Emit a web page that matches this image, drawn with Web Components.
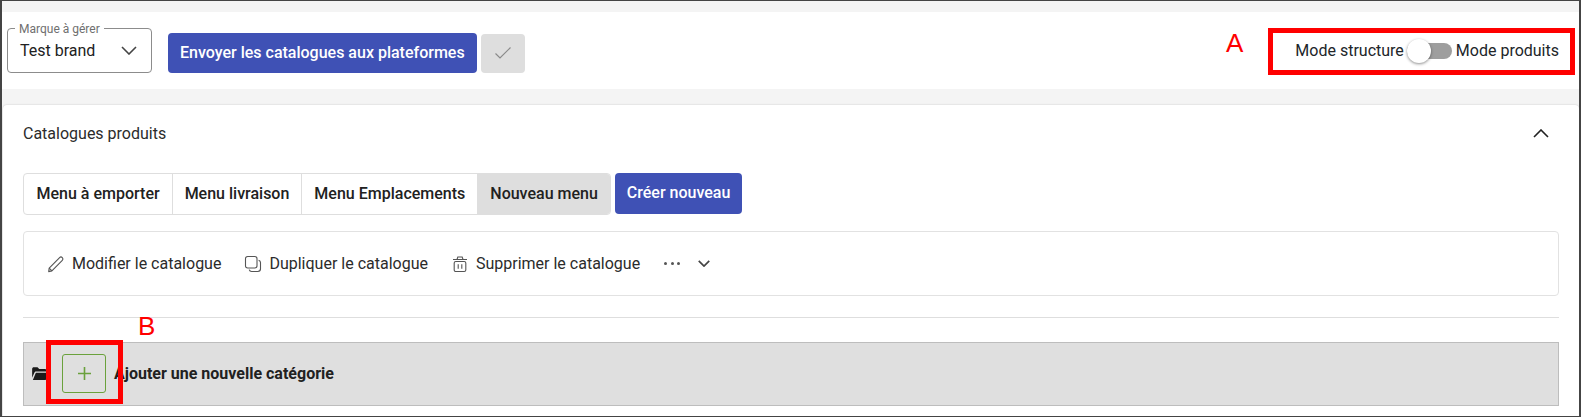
<!DOCTYPE html>
<html lang="fr">
<head>
<meta charset="utf-8">
<title>Catalogues produits</title>
<style>
  html, body { margin: 0; padding: 0; }
  body { font-family: Roboto, "Liberation Sans", sans-serif; color: #212529; }
</style>
</head>
<body>
<catalog-page>
  <top-bar slot="top">
    <brand-select label="Marque à gérer" value="Test brand"></brand-select>
    <send-button>Envoyer les catalogues aux plateformes</send-button>
    <mode-switch slot="end" left="Mode structure" right="Mode produits"></mode-switch>
  </top-bar>
  <catalog-card title="Catalogues produits">
    <tab-row>
      <tab-item>Menu à emporter</tab-item>
      <tab-item>Menu livraison</tab-item>
      <tab-item>Menu Emplacements</tab-item>
      <tab-item active>Nouveau menu</tab-item>
      <blue-button slot="after">Créer nouveau</blue-button>
    </tab-row>
    <catalog-toolbar>
      <tool-action icon="pencil">Modifier le catalogue</tool-action>
      <tool-action icon="copy">Dupliquer le catalogue</tool-action>
      <tool-action icon="trash">Supprimer le catalogue</tool-action>
      <more-actions></more-actions>
    </catalog-toolbar>
    <category-row>Ajouter une nouvelle catégorie</category-row>
  </catalog-card>
</catalog-page>

<script>
"use strict";

const chevron = (d, w, h, sw = 1.6) => `<svg width="${w}" height="${h}" viewBox="0 0 16 9" fill="none" stroke="currentColor" stroke-width="${sw}"><path d="${d}"/></svg>`;

const icons = {
  pencil: `<svg width="18" height="18" viewBox="0 0 18 18" fill="none" stroke="#555" stroke-width="1.1" stroke-linejoin="round"><path d="M2.2 13.2 12.6 2.6a1.9 1.9 0 0 1 2.7 2.7L4.9 15.9l-3.2.7z"/><path d="M2.2 13.2l2.7 2.7"/></svg>`,
  copy: `<svg width="18" height="18" viewBox="0 0 18 18" fill="none" stroke="#555" stroke-width="1.1"><rect x="1.5" y="1.5" width="11.5" height="11.5" rx="2.2"/><path d="M14.6 5.2c1.1.3 1.9 1.2 1.9 2.4v6.2c0 1.5-1.2 2.7-2.7 2.7H7.6c-1.2 0-2.1-.8-2.4-1.9"/></svg>`,
  trash: `<svg width="18" height="18" viewBox="0 0 18 18" fill="none" stroke="#555" stroke-width="1.1"><path d="M2 4.5h14M6 4.5 6.8 2h4.4l.8 2.5"/><rect x="3.2" y="6.5" width="11.6" height="10" rx="1.6"/><path d="M7.2 9.2v4.6M10.8 9.2v4.6"/></svg>`,
};

function define(name, css, markup) {
  customElements.define(name, class extends HTMLElement {
    connectedCallback() {
      if (this.shadowRoot) return;
      const shadow = this.attachShadow({ mode: "open" });
      const attr = (n) => this.getAttribute(n) || "";
      shadow.innerHTML = `<style>${css}</style>${typeof markup === "function" ? markup(attr) : markup}`;
    }
  });
}

define("catalog-page", `
  :host {
    display: flex;
    flex-direction: column;
    box-sizing: border-box;
    width: 1581px;
    height: 417px;
    overflow: hidden;
    background: #f4f4f4;
    border: solid #444;
    border-width: 1px 2px 1px 2px;
    padding-top: 11px;
  }
`, `<slot name="top"></slot><slot></slot>`);

define("top-bar", `
  :host {
    display: flex;
    align-items: center;
    box-sizing: border-box;
    height: 77px;
    margin-bottom: 16px;
    padding: 0 20px 0 5px;
    background: #fff;
    position: relative;
  }
  .end { margin-left: auto; display: flex; }
  .mark { position: absolute; left: 1224px; top: 18px; color: #f00; font: 26px "Liberation Sans", sans-serif; line-height: 26px; }
  .box { position: absolute; left: 1266px; top: 16px; width: 307px; height: 47px; box-sizing: border-box; border: 5px solid #f00; }
  .check { width: 44px; height: 39px; margin: 5px 0 0 4px; border-radius: 4px; background: #dedede; display: flex; align-items: center; justify-content: center; }
`, `<slot></slot>
  <div class="check"><svg width="18" height="14" viewBox="0 0 18 14" fill="none" stroke="#8a8a8a" stroke-width="1.2"><path d="M1.5 7.5 6 12 16.5 1.5"/></svg></div>
  <div class="end"><slot name="end"></slot></div>
  <span class="mark">A</span><div class="box"></div>`);

define("brand-select", `
  :host {
    display: flex;
    align-items: center;
    justify-content: space-between;
    box-sizing: border-box;
    position: relative;
    width: 145px;
    height: 45px;
    padding: 0 14px 0 12px;
    border: 1px solid #8c8c8c;
    border-radius: 4px;
    font-size: 16px;
    color: #212121;
  }
  label {
    position: absolute;
    left: 7px;
    top: -7px;
    padding: 0 4px;
    background: #fff;
    font-size: 12px;
    line-height: 14px;
    color: #6f6f6f;
  }
  svg { color: #444; }
`, (attr) => `<label>${attr("label")}</label><span>${attr("value")}</span>${chevron("M1 1l7 7 7-7", 16, 9)}`);

define("send-button", `
  :host {
    display: flex;
    align-items: center;
    box-sizing: border-box;
    height: 40px;
    margin: 5px 0 0 16px;
    padding: 0 12px 2px;
    background: #3f51b5;
    color: #fff;
    border-radius: 4px;
    font-size: 16px;
    font-weight: 500;
    white-space: nowrap;
  }
`, `<slot></slot>`);

define("blue-button", `
  :host {
    display: flex;
    align-items: center;
    box-sizing: border-box;
    height: 41px;
    margin-left: 4px;
    padding: 0 12px 2px;
    background: #3f51b5;
    color: #fff;
    border-radius: 4px;
    font-size: 16px;
    font-weight: 500;
    white-space: nowrap;
  }
`, `<slot></slot>`);

define("mode-switch", `
  :host {
    display: flex;
    align-items: center;
    font-size: 16px;
    color: #212529;
    white-space: nowrap;
  }
  .track {
    position: relative;
    width: 45px;
    height: 16px;
    margin: 0 4px 0 3px;
    border-radius: 8px;
    background: #9e9e9e;
  }
  .knob {
    position: absolute;
    left: 0;
    top: -4px;
    width: 24px;
    height: 24px;
    border-radius: 50%;
    background: #fff;
    box-shadow: 0 1px 3px rgba(0,0,0,.45);
  }
`, (attr) => `<span>${attr("left")}</span><div class="track"><div class="knob"></div></div><span>${attr("right")}</span>`);

define("catalog-card", `
  :host {
    display: block;
    flex: 1;
    box-sizing: border-box;
    margin: 0 0 0 1px;
    padding: 0 20px;
    background: #fff;
    border-radius: 4px 4px 0 0;
    box-shadow: 0 0 2px rgba(0,0,0,.2);
  }
  header {
    display: flex;
    align-items: center;
    justify-content: space-between;
    height: 56px;
    margin-bottom: 12px;
    font-size: 16px;
    color: #2b2b2b;
  }
  svg { margin-right: 10px; color: #212121; }
`, (attr) => `<header><span>${attr("title")}</span>${chevron("M1 8l7-7 7 7", 16, 9)}</header><slot></slot>`);

define("tab-row", `
  :host { display: flex; align-items: flex-start; height: 42px; }
  .tabs {
    display: flex;
    box-sizing: border-box;
    height: 42px;
    border: 1px solid #dedede;
    border-radius: 4px;
    overflow: hidden;
  }
`, `<div class="tabs"><slot></slot></div><slot name="after"></slot>`);

define("tab-item", `
  :host {
    display: flex;
    align-items: center;
    padding: 0 12px 2px;
    font-size: 16px;
    font-weight: 500;
    color: #212121;
    border-left: 1px solid #dedede;
    white-space: nowrap;
  }
  :host(:first-child) { border-left: none; padding-left: 12.5px; }
  :host([active]) { background: #dedede; }
`, `<slot></slot>`);

define("catalog-toolbar", `
  :host {
    display: flex;
    align-items: center;
    box-sizing: border-box;
    height: 65px;
    margin-top: 16px;
    padding: 0 23px;
    gap: 23px;
    border: 1px solid #e2e2e2;
    border-radius: 4px;
  }
`, `<slot></slot>`);

customElements.define("tool-action", class extends HTMLElement {
  connectedCallback() {
    const shadow = this.attachShadow({ mode: "open" });
    shadow.innerHTML = `<style>
      :host { display: flex; align-items: center; gap: 7px; font-size: 16px; color: #2b2b2b; white-space: nowrap; }
      svg { display: block; }
    </style>${icons[this.getAttribute("icon")]}<slot></slot>`;
  }
});

define("more-actions", `
  :host { display: flex; align-items: center; gap: 18px; margin-left: 1px; color: #444; }
  i { display: block; width: 3px; height: 3px; border-radius: 50%; background: #555; }
  .dots { display: flex; gap: 3.5px; }
`, `<div class="dots"><i></i><i></i><i></i></div>${chevron("M1 1l7 7 7-7", 12, 7, 2.2)}`);

define("category-row", `
  :host {
    display: block;
    position: relative;
    margin-top: 21px;
    padding-top: 24px;
    border-top: 1px solid #dedede;
    font-size: 16px;
    font-weight: 700;
    color: #212121;
    white-space: nowrap;
  }
  .row {
    display: flex;
    align-items: center;
    box-sizing: border-box;
    height: 64px;
    padding: 0 0 1px 8px;
    background: #dfdfdf;
    border: 1px solid #bdbdbd;
  }
  .folder { display: block; }
  .add {
    display: flex;
    align-items: center;
    justify-content: center;
    box-sizing: border-box;
    width: 44px;
    height: 39px;
    margin: 0 8px 0 13px;
    border: 1px solid #6aa13c;
    border-radius: 3px;
    background: #dfdfdf;
  }
  .box { position: absolute; left: 23px; top: 22px; width: 77px; height: 64px; box-sizing: border-box; border: 5px solid #f00; }
  .mark { position: absolute; left: 115px; top: -5px; color: #f00; font: 400 26px "Liberation Sans", sans-serif; line-height: 26px; }
`, `<div class="row"><svg class="folder" width="17" height="13" viewBox="0 0 18 14"><path fill="#1a1a1a" d="M0 2.2C0 1 .8.4 1.8.4h4l1.8 1.8h6c1 0 1.6.6 1.6 1.6v1H4.4c-1 0-1.6.4-2 1.3L0 11.6z"/><path fill="#1a1a1a" d="M4 6.2h13c.8 0 1.2.6.9 1.3l-2.3 5.4c-.3.7-.9 1.1-1.7 1.1H.8z"/></svg>
  <div class="add"><svg width="13" height="13" viewBox="0 0 13 13" stroke="#6aa13c" stroke-width="1.6"><path d="M6.5 0v13M0 6.5h13"/></svg></div>
  <slot></slot></div><div class="box"></div><span class="mark">B</span>`);
</script>
</body>
</html>
